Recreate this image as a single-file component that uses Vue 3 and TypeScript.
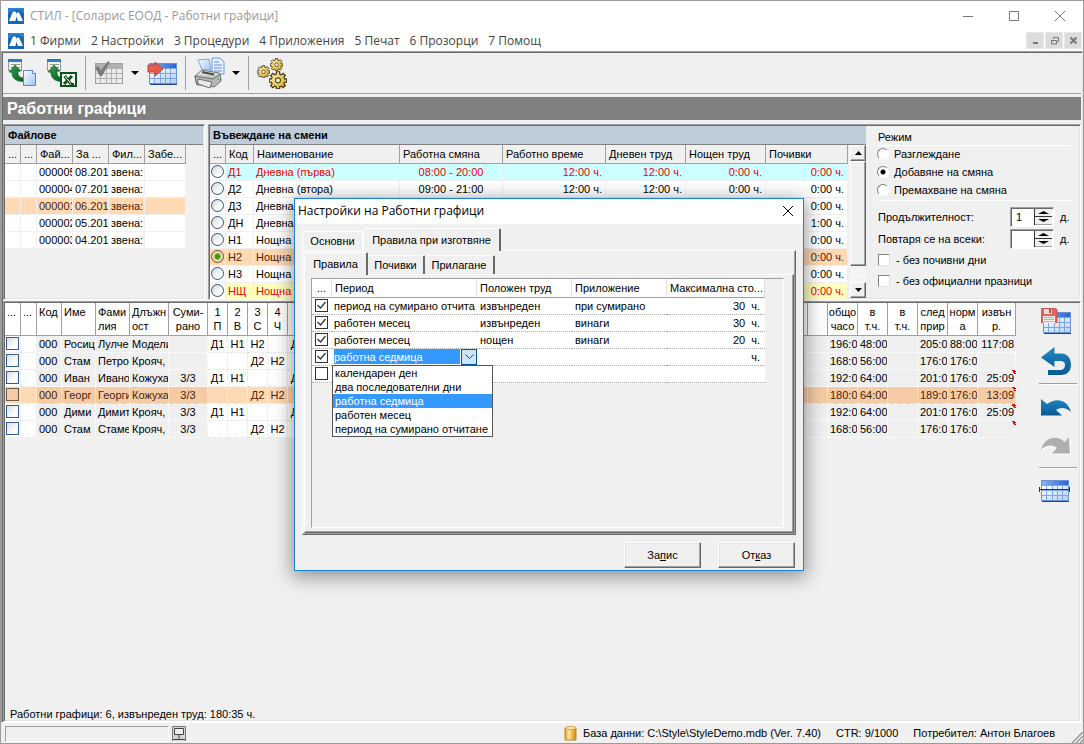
<script setup lang="ts">
import { ref } from 'vue'

interface FileRow { no: string; month: string; filter: string }
interface Shift { code: string; name: string; span: string; work: string; day: string; night: string; rest: string; tone?: string }
interface Person {
  no: string; first: string; last: string; job: string; sum: string; days: string[]
  totals: string[]; over: string; mark: boolean; current?: boolean
}
interface Rule { on: boolean; period: string; kind: string; apply: string; max: string; unit: string }

const menu = ['1 Фирми', '2 Настройки', '3 Процедури', '4 Приложения', '5 Печат', '6 Прозорци', '7 Помощ']

const files: FileRow[] = [
  { no: '000005', month: '08.201', filter: 'звена:' },
  { no: '000004', month: '07.201', filter: 'звена:' },
  { no: '000001', month: '06.201', filter: 'звена:' },
  { no: '000002', month: '05.201', filter: 'звена:' },
  { no: '000003', month: '04.201', filter: 'звена:' },
]
const currentFile = ref('000001')

const shifts: Shift[] = [
  { code: 'Д1', name: 'Дневна (първа)', span: '08:00 - 20:00', work: '12:00 ч.', day: '12:00 ч.', night: '0:00 ч.', rest: '0:00 ч.', tone: 'cyan' },
  { code: 'Д2', name: 'Дневна (втора)', span: '09:00 - 21:00', work: '12:00 ч.', day: '12:00 ч.', night: '0:00 ч.', rest: '0:00 ч.' },
  { code: 'Д3', name: 'Дневна', span: '', work: '', day: '', night: '', rest: '0:00 ч.' },
  { code: 'ДН', name: 'Дневна', span: '', work: '', day: '', night: '', rest: '1:00 ч.' },
  { code: 'Н1', name: 'Нощна (', span: '', work: '', day: '', night: '', rest: '0:00 ч.' },
  { code: 'Н2', name: 'Нощна (', span: '', work: '', day: '', night: '', rest: '0:00 ч.', tone: 'peach' },
  { code: 'Н3', name: 'Нощна (', span: '', work: '', day: '', night: '', rest: '0:00 ч.' },
  { code: 'НЩ', name: 'Нощна (', span: '', work: '', day: '', night: '', rest: '0:00 ч.', tone: 'yellow' },
]
const currentShift = ref('Н2')

const weekdays = ['П', 'В', 'С', 'Ч']
const dayCount = 31
const people: Person[] = [
  { no: '000', first: 'Росиц', last: 'Лулче', job: 'Модели', sum: '', days: ['Д1', 'Н1', 'Н2', '', 'Д1'], totals: ['196:0', '48:00', '', '205:0', '88:00'], over: '117:08', mark: false },
  { no: '000', first: 'Стам', last: 'Петро', job: 'Крояч,', sum: '', days: ['', '', 'Д2', 'Н2', ''], totals: ['168:0', '56:00', '', '176:0', '176:0'], over: '', mark: false },
  { no: '000', first: 'Иван', last: 'Ивано', job: 'Кожуха', sum: '3/3', days: ['Д1', 'Н1', '', '', 'Д1'], totals: ['192:0', '64:00', '', '201:0', '176:0'], over: '25:09', mark: true },
  { no: '000', first: 'Георг', last: 'Георги', job: 'Кожуха', sum: '3/3', days: ['', '', 'Д2', 'Н2', ''], totals: ['180:0', '64:00', '', '189:0', '176:0'], over: '13:09', mark: true, current: true },
  { no: '000', first: 'Дими', last: 'Димит', job: 'Крояч,', sum: '3/3', days: ['Д1', 'Н1', '', '', 'Д1'], totals: ['192:0', '64:00', '', '201:0', '176:0'], over: '25:09', mark: true },
  { no: '000', first: 'Стам', last: 'Стаме', job: 'Крояч,', sum: '3/3', days: ['', '', 'Д2', 'Н2', ''], totals: ['168:0', '56:00', '', '176:0', '176:0'], over: '', mark: true },
]

const modes = ['Разглеждане', 'Добавяне на смяна', 'Премахване на смяна']
const mode = ref('Добавяне на смяна')
const duration = ref('1')
const repeat = ref('')

const rules = ref<Rule[]>([
  { on: true, period: 'период на сумирано отчита', kind: 'извънреден', apply: 'при сумирано', max: '30', unit: 'ч.' },
  { on: true, period: 'работен месец', kind: 'извънреден', apply: 'винаги', max: '30', unit: 'ч.' },
  { on: true, period: 'работен месец', kind: 'нощен', apply: 'винаги', max: '20', unit: 'ч.' },
  { on: true, period: '', kind: '', apply: '', max: '', unit: 'ч.' },
  { on: false, period: '', kind: '', apply: '', max: '', unit: '' },
])
const editedRule = 3
const periods = ['календарен ден', 'два последователни дни', 'работна седмица', 'работен месец', 'период на сумирано отчитане']
const period = ref('работна седмица')
const listOpen = ref(true)
</script>

<template>
  <div class="window">
    <svg class="defs" width="0" height="0" aria-hidden="true">
      <defs>
        <linearGradient id="blueHead" x1="0" y1="0" x2="1" y2="0"><stop offset="0" stop-color="#86b4ee" /><stop offset="1" stop-color="#2a62d4" /></linearGradient>
        <linearGradient id="cellBlue" x1="0" y1="0" x2="1" y2="1"><stop offset="0" stop-color="#ffffff" /><stop offset="1" stop-color="#b4cdf4" /></linearGradient>
        <linearGradient id="arrowBlue" x1="0" y1="0" x2="0" y2="1"><stop offset="0" stop-color="#2286c0" /><stop offset="1" stop-color="#085a94" /></linearGradient>
        <linearGradient id="paper" x1="0" y1="0" x2="1" y2="1"><stop offset="0" stop-color="#ffffff" /><stop offset="1" stop-color="#9cc3f3" /></linearGradient>
        <linearGradient id="gold" x1="0" y1="0" x2="1" y2="1"><stop offset="0" stop-color="#fff6c0" /><stop offset="1" stop-color="#d3a41c" /></linearGradient>
        <linearGradient id="drum" x1="0" y1="0" x2="1" y2="0"><stop offset="0" stop-color="#e79a10" /><stop offset="0.35" stop-color="#ffe9a0" /><stop offset="1" stop-color="#d88400" /></linearGradient>
        <linearGradient id="green" x1="0" y1="0" x2="1" y2="1"><stop offset="0" stop-color="#35a04e" /><stop offset="1" stop-color="#0b5a24" /></linearGradient>
        <linearGradient id="metal" x1="0" y1="0" x2="0" y2="1"><stop offset="0" stop-color="#f4f4f0" /><stop offset="1" stop-color="#8f9090" /></linearGradient>
        <symbol id="brand" viewBox="0 0 16 16">
          <rect width="16" height="16" fill="#1767b8" />
          <path d="M0 0H16V5L11 2H5L0 6Z" fill="#2b80d0" />
          <path d="M1 13 5 3.500H7.500L8.500 6 9 4.500H11L15 13H10L8.500 8.500 7.500 13Z" fill="#fff" />
        </symbol>
        <symbol id="grid" viewBox="0 0 28 22">
          <rect x="0.500" y="0.500" width="27" height="20" fill="#7ca6e6" stroke="#6a93d4" />
          <rect x="1" y="1" width="26" height="4" fill="url(#blueHead)" />
          <g fill="url(#cellBlue)">
            <path d="M1 6h4v4H1zM6 6h5v4H6zM12 6h4v4h-4zM17 6h4v4h-4zM22 6h5v4h-5zM1 11h4v4H1zM6 11h5v4H6zM12 11h4v4h-4zM17 11h4v4h-4zM22 11h5v4h-5zM1 16h4v4H1zM6 16h5v4H6zM12 16h4v4h-4zM17 16h4v4h-4zM22 16h5v4h-5z" />
          </g>
          <path d="M1 21.500H28" stroke="#24457f" />
        </symbol>
        <symbol id="import" viewBox="0 0 20 24">
          <rect x="0.500" y="0.500" width="13" height="11" fill="#f4f2dc" stroke="#8a9aa8" />
          <rect x="0" y="0" width="14" height="3" fill="#2a78d0" />
          <path d="M3 5.500h9M3 8.500h9" stroke="#8f9a9a" />
          <path d="M1 13 7 6l6 6-3 .500c0 4 1 6 6 6.500v3.500C7 23 3.500 18 4 13.500Z" fill="url(#green)" stroke="#0b5a24" stroke-width="0.500" />
        </symbol>
        <symbol id="gear" viewBox="0 0 16 16">
          <path d="M6.500 0.700h3v2l1.600.700L12.600 2l2 2-1.400 1.500.600 1.500h2v3h-2l-.600 1.400 1.400 1.500-2 2-1.500-1.400-1.600.700v1.600h-3v-1.600l-1.600-.700-1.500 1.400-2-2 1.400-1.500L2.200 10h-2V7h2l.600-1.500L1.400 4l2-2 1.500 1.400 1.600-.700Z" fill="url(#gold)" stroke="#3b3210" />
          <circle cx="8" cy="8.300" r="2.200" fill="#efefef" stroke="#5e4c10" />
        </symbol>
      </defs>
    </svg>

    <header class="titlebar">
      <svg class="brand" aria-hidden="true"><use href="#brand" /></svg>
      <h1>СТИЛ - [Соларис ЕООД - Работни графици]</h1>
      <div class="caption-buttons">
        <button aria-label="Минимизирай"><svg width="12" height="12"><path d="M1 6.500h10" /></svg></button>
        <button aria-label="Увеличи"><svg width="12" height="12"><path d="M1.500 1.500h9v9h-9z" /></svg></button>
        <button aria-label="Затвори"><svg width="12" height="12"><path d="M1 1l10 10M11 1L1 11" /></svg></button>
      </div>
    </header>

    <nav class="menubar">
      <svg class="brand" aria-hidden="true"><use href="#brand" /></svg>
      <button v-for="m in menu" :key="m" class="menu-item">{{ m }}</button>
      <div class="mdi-buttons">
        <button aria-label="Минимизирай прозореца"><svg width="9" height="9"><path d="M2 7h5" stroke-width="2" /></svg></button>
        <button aria-label="Възстанови прозореца"><svg width="9" height="9"><path d="M3.500 3V1.500h5v4H7M1 4.500h5.500v3.500H1.500V4" /></svg></button>
        <button aria-label="Затвори прозореца"><svg width="9" height="9"><path d="M1.500 1.500l6 6M7.500 1.500l-6 6" stroke-width="2" /></svg></button>
      </div>
    </nav>

    <main class="client">
      <div class="toolbar" role="toolbar">
        <button class="tool" aria-label="Нов файл">
          <svg width="30" height="30"><use href="#import" x="0" y="1" width="20" height="24" /><path d="M15.500 12.500h9l3 3v12h-12z" fill="url(#paper)" stroke="#5f86b8" /><path d="M24.500 12.500v3h3" fill="#fff" stroke="#5f86b8" /></svg>
        </button>
        <button class="tool tool-excel" aria-label="Експорт в Excel">
          <svg width="30" height="30"><use href="#import" x="0" y="1" width="20" height="24" /><rect x="14" y="15" width="15" height="13" fill="#fff" stroke="#0b5418" stroke-width="2" /><path d="M17.500 18l6.500 8M25 18l-8 8" stroke="#0b5418" stroke-width="3" /><path d="M18 18.500l6 7" stroke="#fff" /><path d="M24 26h3" stroke="#0b5418" stroke-width="2" /></svg>
        </button>
        <i class="sep"></i>
        <button class="tool" aria-label="Одобри">
          <svg width="30" height="28"><rect x="1.500" y="4.500" width="27" height="20" fill="#b2b0b0" stroke="#a4a2a4" /><path d="M2 10h4v4H2zM7 10h5v4H7zM13 10h4v4h-4zM18 10h4v4h-4zM23 10h5v4h-5zM2 15h4v4H2zM7 15h5v4H7zM13 15h4v4h-4zM18 15h4v4h-4zM23 15h5v4h-5zM2 20h4v4H2zM7 20h5v4H7zM13 20h4v4h-4zM18 20h4v4h-4zM23 20h5v4h-5z" fill="#ebe9ea" /><path d="M1 9l3-2 3 4 7-9 2 1-8 14H6z" fill="#7d7b7f" /></svg>
        </button>
        <button class="drop" aria-label="Още за одобряване"></button>
        <button class="tool tool-send" aria-label="Прехвърли">
          <svg width="30" height="28"><use href="#grid" x="2" y="4" width="28" height="22" /><path d="M1 6h7V3l8 7-8 7v-4H1z" fill="#ec5a4a" stroke="#b5443c" /></svg>
        </button>
        <i class="sep"></i>
        <button class="tool" aria-label="Печат">
          <svg width="31" height="32"><path d="M4 3l11-1 2 11H8z" fill="url(#paper)" stroke="#7ea4dd" /><path d="M18 1h8l4 4v12H18z" fill="#e5f0ff" stroke="#6f9ade" /><path d="M20 5h5M20 8h8M20 11h8M20 14h8" stroke="#5f8fdc" /><path d="M1 19l7-6 17 3 2 7-6 5H3z" fill="url(#metal)" stroke="#717474" /><path d="M1 19l18 3 7-5 1 7-7 6-18-4z" fill="#b6b8b8" stroke="#6b6e6e" /><path d="M4 22l14 3-2 6-12-4z" fill="#e9ebeb" stroke="#6b6e6e" /><path d="M8 15l12 2.500" stroke="#4b4d4d" stroke-width="2" /><circle cx="24" cy="22" r="1" fill="#4cc04c" /></svg>
        </button>
        <button class="drop" aria-label="Още за печат"></button>
        <i class="sep"></i>
        <button class="tool" aria-label="Настройки">
          <svg width="32" height="32"><use href="#gear" x="0" y="8" width="13" height="13" /><use href="#gear" x="13" y="1" width="13" height="13" /><use href="#gear" x="12" y="14" width="18" height="18" /></svg>
        </button>
      </div>

      <h2 class="banner">Работни графици</h2>

      <div class="upper">
        <section class="panel files">
          <h3>Файлове</h3>
          <table class="grid">
            <colgroup><col class="w16"><col class="w16"><col class="w36"><col class="w36"><col class="w36"><col class="w41"></colgroup>
            <thead><tr><th>...</th><th>...</th><th>Фай...</th><th>За ...</th><th>Фил...</th><th>Забе...</th></tr></thead>
            <tbody>
              <tr v-for="f in files" :key="f.no" :class="{ peach: f.no === currentFile }" @click="currentFile = f.no">
                <td></td><td></td><td>{{ f.no }}</td><td>{{ f.month }}</td><td>{{ f.filter }}</td><td></td>
              </tr>
            </tbody>
          </table>
        </section>

        <section class="panel shift-panel">
          <div class="shifts">
            <h3>Въвеждане на смени</h3>
            <div class="shift-body">
              <table class="grid shift-table">
                <colgroup><col class="w16"><col class="w28"><col class="wide"><col class="w103"><col class="w103"><col class="w80"><col class="w80"><col class="w82"></colgroup>
                <thead><tr><th>...</th><th>Код</th><th>Наименование</th><th>Работна смяна</th><th>Работно време</th><th>Дневен труд</th><th>Нощен труд</th><th>Почивки</th></tr></thead>
                <tbody>
                  <tr v-for="s in shifts" :key="s.code" :class="s.tone">
                    <td class="pick"><input v-model="currentShift" type="radio" name="shift" :value="s.code" :aria-label="s.code"></td>
                    <td>{{ s.code }}</td><td>{{ s.name }}</td><td class="mid">{{ s.span }}</td>
                    <td class="num">{{ s.work }}</td><td class="num">{{ s.day }}</td><td class="num">{{ s.night }}</td><td class="num">{{ s.rest }}</td>
                  </tr>
                </tbody>
              </table>
              <div class="scrollbar">
                <button aria-label="Нагоре"><svg width="7" height="4"><path d="M0 4L3.500 0 7 4z" /></svg></button>
                <span class="thumb"></span>
                <button aria-label="Надолу"><svg width="7" height="4"><path d="M0 0L3.500 4 7 0z" /></svg></button>
              </div>
            </div>
          </div>

          <form class="mode" @submit.prevent>
            <div class="mode-title">Режим</div>
            <div class="radios">
              <label v-for="m in modes" :key="m"><input v-model="mode" type="radio" name="mode" :value="m">{{ m }}</label>
            </div>
            <div class="spin-row">
              <label for="duration">Продължителност:</label>
              <div class="spin">
                <input id="duration" v-model="duration" type="text">
                <div class="spin-buttons">
                  <button aria-label="Повече дни"><svg width="11" height="3"><path d="M0 3L5.500 0 11 3z" /></svg></button>
                  <button aria-label="По-малко дни"><svg width="11" height="3"><path d="M0 0L5.500 3 11 0z" /></svg></button>
                </div>
              </div>
              <span>д.</span>
            </div>
            <div class="spin-row">
              <label for="repeat">Повтаря се на всеки:</label>
              <div class="spin">
                <input id="repeat" v-model="repeat" type="text">
                <div class="spin-buttons">
                  <button aria-label="По-рядко"><svg width="11" height="3"><path d="M0 3L5.500 0 11 3z" /></svg></button>
                  <button aria-label="По-често"><svg width="11" height="3"><path d="M0 0L5.500 3 11 0z" /></svg></button>
                </div>
              </div>
              <span>д.</span>
            </div>
            <label class="tick"><input type="checkbox">- без почивни дни</label>
            <label class="tick"><input type="checkbox">- без официални празници</label>
          </form>
        </section>
      </div>

      <section class="panel schedule">
        <div class="schedule-main">
          <div class="schedule-scroll">
            <table class="plan">
              <colgroup>
                <col class="w16"><col class="w16"><col class="w25"><col class="w34"><col class="w34"><col class="w39"><col class="w39">
                <col v-for="d in dayCount" :key="d" class="w20">
                <col class="w30"><col class="w30"><col class="w30"><col class="w30"><col class="w30"><col class="w38">
              </colgroup>
              <thead>
                <tr>
                  <th>...</th><th>...</th><th>Код</th><th>Име</th><th>Фами<br>лия</th><th>Длъжн<br>ост</th><th class="mid">Суми-<br>рано</th>
                  <th v-for="d in dayCount" :key="d" class="mid"><template v-if="d <= weekdays.length">{{ d }}<br>{{ weekdays[d - 1] }}</template></th>
                  <th class="mid">общо<br>часо</th><th class="mid">в<br>т.ч.</th><th class="mid">в<br>т.ч.</th><th class="mid">след<br>прир</th><th class="mid">норм<br>а</th><th class="mid">извън<br>р.</th>
                </tr>
              </thead>
              <tbody>
                <tr v-for="(p, i) in people" :key="i" :class="{ current: p.current }">
                  <td class="day pick"><input type="checkbox" :aria-label="p.first"></td>
                  <td class="day"></td>
                  <td>{{ p.no }}</td><td>{{ p.first }}</td><td>{{ p.last }}</td><td>{{ p.job }}</td><td class="mid">{{ p.sum }}</td>
                  <td v-for="d in dayCount" :key="d" :class="['mid', { day: d < 29 }]">{{ p.days[d - 1] }}</td>
                  <td v-for="(t, k) in p.totals" :key="'t' + k">{{ t }}</td>
                  <td class="over" :class="{ marked: p.mark }">{{ p.over }}</td>
                </tr>
              </tbody>
            </table>
          </div>
          <div class="side" role="toolbar">
            <button class="s1" aria-label="Запиши"><svg width="32" height="28"><use href="#grid" x="2" y="5" width="28" height="22" /><path d="M0 1.500h14l2 1v13H0z" fill="#e0655e" stroke="#c65550" /><path d="M3 2h8v5H3z" fill="#f3dcd6" /><path d="M8 2h2v4H8z" fill="#c14b46" /><path d="M2 9h12v7H2z" fill="#f8efea" /><path d="M3 10.500h10M3 12.500h10M3 14.500h10" stroke="#d9a49c" /></svg></button>
            <button class="s2" aria-label="Върни"><svg width="32" height="30"><path d="M0 10.500L13.500 0V6.500H20C27 6.500 30 12 30 17.500 30 24 26 28 20 28H7V23H19C22 23 24 21 24 18 24 15 22 14 19 14H13.500V20Z" fill="url(#arrowBlue)" /></svg></button>
            <i></i>
            <button class="s3" aria-label="Отмени"><svg width="32" height="20"><path d="M0 1l6 5C14 0 26 0 30 14 25 9 19 9 15 12l6 5.500H0z" fill="url(#arrowBlue)" /></svg></button>
            <button class="s4" aria-label="Повтори"><svg width="32" height="20"><path d="M30 2l-5 5C17 0 5 1 1 15 7 9 13 10 17 13l-5 5.500h18z" fill="#fff" /><path d="M28 1l-4 5C16-1 4 0 0 14 6 8 12 9 16 12l-5 5.500h18z" fill="#afafaf" /></svg></button>
            <i></i>
            <button class="s5" aria-label="Раздели"><svg width="32" height="22"><use href="#grid" x="2" y="0" width="28" height="22" /><path d="M0 9.500h31M0.500 7v5M30.500 7v5" stroke="#24364c" /></svg></button>
          </div>
        </div>
        <p class="summary">Работни графици: 6, извънреден труд: 180:35 ч.</p>
      </section>
    </main>

    <footer class="status">
      <span class="well"></span>
      <svg width="14" height="15" aria-hidden="true"><rect width="14" height="15" fill="#d4d4d4" /><path d="M0.500 15V0.500H13.500V15" fill="none" stroke="#777" /><path d="M2.500 2.500h9v6h-9z" fill="#eee" stroke="#444" /><path d="M7 9v4M1 13.500h12" stroke="#444" /></svg>
      <div class="facts">
        <span class="db"><svg width="13" height="15" aria-hidden="true"><path d="M1 2h11v12H1z" fill="url(#drum)" stroke="#c98a18" /><ellipse cx="6.500" cy="2" rx="5.500" ry="1.500" fill="#ffefb8" stroke="#c79a40" /></svg>База данни: C:\Style\StyleDemo.mdb (Ver. 7.40)</span>
        <span>CTR: 9/1000</span>
        <span>Потребител: Антон Благоев</span>
      </div>
      <svg class="grip" width="12" height="12" aria-hidden="true"><path d="M1 12L12 1M5 12L12 5M9 12L12 9" stroke="#999" stroke-width="1.500" /></svg>
    </footer>

    <div class="dialog" role="dialog" aria-labelledby="dialog-title">
      <div class="dialog-title">
        <h2 id="dialog-title">Настройки на Работни графици</h2>
        <button aria-label="Затвори"><svg width="12" height="12"><path d="M1 1l10 10M11 1L1 11" /></svg></button>
      </div>
      <div class="dialog-body">
        <div class="tabs" role="tablist">
          <button role="tab" class="t-main">Основни</button>
          <button role="tab" class="t-rules active" aria-selected="true">Правила при изготвяне</button>
        </div>
        <div class="sheet outer">
          <div class="tabs" role="tablist">
            <button role="tab" class="t-list active" aria-selected="true">Правила</button>
            <button role="tab" class="t-rest framed">Почивки</button>
            <button role="tab" class="t-apply framed">Прилагане</button>
          </div>
          <div class="sheet inner">
            <div class="rule-box">
              <table class="rules">
                <colgroup><col class="w20"><col class="w145"><col class="w95"><col class="w95"><col class="w98"></colgroup>
                <thead><tr><th>...</th><th>Период</th><th>Положен труд</th><th>Приложение</th><th>Максимална сто...</th></tr></thead>
                <tbody>
                  <tr v-for="(r, i) in rules" :key="i">
                    <td class="pick"><input v-model="r.on" type="checkbox" :aria-label="'Правило ' + (i + 1)"></td>
                    <td v-if="i === editedRule" class="combo-cell">
                      <button class="combo" role="combobox" :aria-expanded="listOpen" aria-controls="period-list" @click="listOpen = !listOpen">
                        <span class="combo-value">{{ period }}</span>
                        <span class="combo-arrow"><svg width="9" height="6"><path d="M0.500 0.500l4 4 4-4" /></svg></span>
                      </button>
                      <select v-show="listOpen" id="period-list" v-model="period" size="5" aria-label="Период">
                        <option v-for="o in periods" :key="o" :value="o">{{ o }}</option>
                      </select>
                    </td>
                    <td v-else>{{ r.period }}</td>
                    <td>{{ r.kind }}</td><td>{{ r.apply }}</td>
                    <td class="limit"><span>{{ r.max }}</span><span class="unit">{{ r.unit }}</span></td>
                  </tr>
                </tbody>
              </table>
            </div>
          </div>
        </div>
        <div class="actions">
          <button>За<u>п</u>ис</button>
          <button>От<u>к</u>аз</button>
        </div>
      </div>
    </div>
  </div>
</template>

<style>
html, body { background: #f0f0f0; }
</style>

<style scoped>
.window, .window * { box-sizing: border-box; }
.window {
  position: relative; display: flex; flex-direction: column; height: 100vh; overflow: hidden;
  border: 1px solid #9a9a9a; background: #f0f0f0; color: #000;
  font: 11px/14px "Liberation Sans", Arial, sans-serif;
}
.defs { position: absolute; }
button { margin: 0; padding: 0; border: 0; background: none; color: inherit; font: inherit; }
button svg { display: block; }
h1, h2, h3, p { margin: 0; font: inherit; }
input { margin: 0; font: inherit; }

.titlebar { display: flex; align-items: center; flex: none; height: 29px; padding-left: 7px; background: #fff; color: #999; }
.brand { flex: none; width: 16px; height: 16px; margin-right: 6px; }
.titlebar h1 { font: 12px/16px "Open Sans", "Noto Sans", sans-serif; }
.caption-buttons { display: flex; margin-left: auto; }
.caption-buttons button { display: flex; justify-content: center; align-items: center; width: 46px; height: 28px; }
.caption-buttons svg, .mdi-buttons svg { fill: none; stroke: #777; }

.menubar { display: flex; align-items: center; flex: none; height: 21px; padding-left: 7px; background: #fff; color: #444; }
.menu-item { margin-right: 10px; font: 12px/18px "Open Sans", "Noto Sans", sans-serif; }
.mdi-buttons { display: flex; gap: 1px; margin-left: auto; padding-right: 1px; }
.mdi-buttons button { display: flex; align-items: center; justify-content: center; width: 18px; height: 17px; background: #dcdcdc; border: 1px solid #e8e8e8; }

.client { display: flex; flex-direction: column; flex: 1; min-height: 0; border: 1px solid; border-color: #a0a0a0 #e3e3e3 #fff #a0a0a0; box-shadow: inset 1px 1px 0 #696969; padding: 1px 1px 0 1px; }
.toolbar { display: flex; align-items: center; flex: none; height: 41px; padding-left: 5px; padding-bottom: 1px; border-bottom: 1px solid #a0a0a0; }
.toolbar .tool { flex: none; }
.tool-excel { margin-left: 9px; }
.sep { flex: none; width: 1px; height: 34px; margin: 0 8px; background: #a0a0a0; }
.drop { width: 8px; height: 34px; margin-left: 7px; }
.drop::before { content: ""; display: block; border: 4px solid transparent; border-top-color: #000; border-bottom: 0; }
.tool-send { margin-left: 8px; }
.banner { flex: none; height: 23px; margin-top: 3px; padding-left: 4px; background: #808080; color: #fff; font-size: 16px; line-height: 23px; font-weight: 700; }

.upper { display: flex; flex: none; gap: 3px; height: 176px; margin-top: 4px; }
.panel { border: 1px solid; border-color: #a0a0a0 #fff #fff #a0a0a0; box-shadow: inset 1px 1px 0 #696969, inset -1px -1px 0 #e3e3e3; padding: 1px; overflow: hidden; }
.files { flex: none; width: 202px; }
h3 { height: 19px; padding-left: 3px; border-bottom: 1px solid #808080; background: #bfcddb; font-weight: 700; line-height: 18px; }
.shift-panel { display: flex; flex: 1; min-width: 0; }
.shifts { flex: 1; min-width: 0; }
.shift-body { display: flex; gap: 2px; height: 153px; }

table { table-layout: fixed; border-collapse: separate; border-spacing: 0; }
th, td { padding: 0; overflow: hidden; white-space: nowrap; text-align: left; font-weight: 400; }
.w16 { width: 16px; } .w20 { width: 20px; } .w25 { width: 25px; } .w28 { width: 28px; }
.w30 { width: 30px; } .w34 { width: 34px; } .w36 { width: 36px; } .w38 { width: 38px; }
.w39 { width: 39px; } .w41 { width: 41px; } .w80 { width: 80px; } .w82 { width: 82px; } .w95 { width: 95px; }
.w98 { width: 98px; } .w103 { width: 103px; } .w145 { width: 145px; }

.grid { width: 181px; }
.grid th { height: 19px; padding-left: 3px; border-right: 1px solid #a0a0a0; border-bottom: 1px solid #a0a0a0; background: #f0f0f0; line-height: 18px; }
.grid td { height: 17px; padding: 0 2px; border-right: 1px solid #f0f0f0; border-bottom: 1px solid #f0f0f0; background: #fff; line-height: 16px; }
.shift-table { flex: 1; min-width: 0; width: auto; }
.grid .num { padding-right: 3px; text-align: right; }
.mid { text-align: center; }
.peach td { background: #ffd8b4; color: #4a2408; }
.cyan td { background: #ccffff; color: #f00000; }
.yellow td { background: #ffffc0; color: #f00000; }
.cyan .pick, .yellow .pick { background: #fff; }
.grid .pick, .plan .pick, .rules .pick { padding: 0; vertical-align: top; }
.pick input { display: block; appearance: none; width: 13px; height: 13px; }
.grid .pick input { margin: 1px; border: 1px solid #34506e; border-radius: 50%; background: linear-gradient(135deg, #cfd6dc, #fff 70%); }
.grid .pick input:checked { border-color: #6b5228; background: radial-gradient(circle, #3f9a10 0 2px, #8cc058 3px, #f4d9b4 4px); }

.scrollbar { display: flex; flex-direction: column; flex: none; width: 16px; background: repeating-conic-gradient(#fff 0 25%, #eaeaea 0 50%) 0 0/2px 2px; }
.scrollbar button, .thumb { border: 1px solid; border-color: #fff #696969 #696969 #fff; background: #f0f0f0; box-shadow: inset -1px -1px 0 #a0a0a0; }
.scrollbar button { display: flex; align-items: center; justify-content: center; flex: none; height: 16px; }
.thumb { height: 105px; margin-bottom: auto; }

.mode { flex: none; width: 213px; padding: 4px 8px 0 11px; }
.mode-title { padding-left: 1px; line-height: 15px; }
.radios { display: flex; flex-direction: column; gap: 4px; height: 56px; margin-bottom: 5px; padding-top: 1px; border-top: 1px solid #fff; border-bottom: 1px solid #fff; }
.radios label { display: flex; align-items: center; height: 14px; }
.radios input { appearance: none; width: 12px; height: 12px; margin-right: 5px; border: 1px solid; border-color: #808080 #fff #fff #808080; border-radius: 50%; background: #fff; }
.radios input:checked { background: radial-gradient(circle, #000 0 2px, #fff 3px); }
.spin-row { display: flex; align-items: center; height: 22px; padding-left: 1px; }
.spin-row > label { flex: 1; }
.spin-row > span { width: 11px; margin-left: 6px; white-space: nowrap; }
.spin { display: flex; width: 44px; height: 20px; border: 1px solid; border-color: #a0a0a0 #fff #fff #a0a0a0; background: #fff; box-shadow: inset 1px 1px 0 #696969; padding: 1px; }
.spin input { flex: 1; min-width: 0; padding: 0 0 0 4px; border: 0; background: #fff; }
.spin-buttons { width: 18px; border-left: 1px solid #333; background: #f0f0f0; }
.spin-buttons button { display: flex; align-items: center; justify-content: center; width: 100%; height: 8px; border-bottom: 1px solid #333; }
.spin-buttons button:last-child { border-bottom-color: #a0a0a0; }
.tick { display: flex; align-items: center; height: 22px; padding-left: 1px; white-space: nowrap; }
.spin-row + .tick { height: 20px; }
.tick input { appearance: none; width: 12px; height: 12px; margin-right: 6px; border: 1px solid; border-color: #808080 #e3e3e3 #e3e3e3 #808080; background: #fff; }

.schedule { display: flex; flex-direction: column; flex: 1; min-height: 0; margin-top: 1px; }
.schedule-main { display: flex; flex: 1; min-height: 0; }
.schedule-scroll { flex: 1; min-width: 0; overflow: hidden; }
.plan { width: 1011px; }
.plan th { height: 33px; padding: 2px 0 0 2px; border-right: 1px solid #a0a0a0; border-bottom: 1px solid #a0a0a0; background: #fff; vertical-align: top; }
.plan th.mid { padding-left: 0; }
.plan td { height: 17px; padding-left: 2px; border-right: 1px dotted #fff; border-bottom: 1px dotted #fff; background: #efefef; line-height: 16px; }
.plan td.mid { padding: 0; }
.plan .day { border-color: #e4e4e4; background: #fff; }
.plan .current td { background: #f5cba5; border-color: #fff; color: #4a2408; }
.plan .current .day { background: #ffd8b4; }
.plan .pick input { margin: 1px; border: 1px solid #2f5e94; background: linear-gradient(135deg, #dcdcdc, #fff 70%); }
.plan .current .pick input { border-color: #6b5a48; background: #f5cba5; }
.plan .over { padding: 0 1px 0 0; text-align: right; }
.plan .over.marked { background-image: linear-gradient(to top right, transparent 50%, #f00 50%); background-repeat: no-repeat; background-size: 5px 5px; background-position: right top; background-origin: border-box; }

.side { display: flex; flex-direction: column; flex: none; width: 43px; padding: 4px 2px 0 3px; }
.side button { height: 28px; padding-left: 2px; }
.side i { height: 2px; border-top: 1px solid #a0a0a0; border-bottom: 1px solid #fff; }
.side .s2 { height: 30px; margin: 12px 0 6px; }
.side .s3 { height: 20px; margin: 13px 0 18px; }
.side .s4 { height: 20px; margin-bottom: 11px; }
.side .s5 { height: 22px; margin-top: 11px; padding: 0; }
.summary { flex: none; padding-left: 5px; line-height: 12px; }

.status { display: flex; align-items: center; flex: none; height: 20px; padding: 1px 0 0 4px; }
.well { width: 164px; height: 16px; margin-right: 3px; border: 1px solid; border-color: #a0a0a0 #fff #fff #a0a0a0; }
.facts { display: flex; gap: 15px; margin-left: auto; }
.db { display: flex; gap: 6px; }
.grip { align-self: flex-end; margin-left: 16px; }

.dialog { position: absolute; left: 293px; top: 197px; width: 510px; border: 1px solid #1883d7; background: #f0f0f0; box-shadow: 0 4px 18px 2px rgba(0, 0, 0, 0.4); }
.dialog-title { display: flex; align-items: center; justify-content: space-between; height: 25px; padding: 0 9px 1px 3px; background: #fff; }
.dialog-title h2 { font: 12px/16px "Open Sans", "Noto Sans", sans-serif; }
.dialog-title svg { fill: none; stroke: #000; }
.dialog-body { padding: 4px 7px 2px; }
.tabs { display: flex; align-items: flex-end; height: 22px; }
.tabs button { height: 19px; border: 1px solid #fff; border-bottom: 0; text-align: center; border-radius: 2px 2px 0 0; white-space: nowrap; }
.tabs .framed { border-right: 2px solid #696969; border-left: 0; }
.tabs .active { height: 23px; margin-bottom: -1px; padding-bottom: 1px; border-right: 2px solid #696969; background: #f0f0f0; position: relative; }
.t-main { width: 61px; }
.t-rules { width: 138px; }
.t-list { width: 64px; }
.t-rest { width: 57px; }
.t-apply { width: 70px; }
.sheet { border: 1px solid; border-color: #fff #696969 #696969 #fff; box-shadow: inset -1px -1px 0 #a0a0a0; }
.outer { padding: 1px; }
.inner { padding: 3px 9px 4px 6px; }
.rule-box { height: 250px; border: 1px solid; border-color: #a0a0a0 #fff #fff #a0a0a0; }
.rules { width: 453px; }
.rules th { height: 19px; padding-left: 3px; border-right: 1px solid #e3e3e3; border-bottom: 1px solid #a0a0a0; background: #fff; line-height: 18px; }
.rules th:first-child { padding-left: 5px; }
.rules td { height: 17px; padding-left: 3px; border-bottom: 1px dotted #aaa; background: #fff; line-height: 16px; }
.rules td:nth-child(2) { padding-left: 2px; }
.rules .pick input { margin: 1px 3px; border: 1px solid #333; background: #fff; }
.rules .pick input:checked { background: #fff url("data:image/svg+xml,%3Csvg xmlns='http://www.w3.org/2000/svg' width='11' height='11'%3E%3Cpath d='M1.500 5l3 3 5-6' fill='none' stroke='%23333' stroke-width='1.300'/%3E%3C/svg%3E"); }
.rules .limit { padding-right: 5px; text-align: right; }
.unit { margin-left: 6px; }
.rules .combo-cell { position: relative; overflow: visible; }
.combo { display: flex; width: 100%; height: 16px; text-align: left; }
.combo-value { flex: 1; height: 15px; margin-right: 1px; background: #3399ff; color: #fff; line-height: 16px; }
.combo-arrow { display: flex; align-items: center; justify-content: center; width: 16px; border: 1px solid #005499; background: #cce4f7; }
.combo-arrow svg { fill: none; stroke: #444; }
select { position: absolute; left: 0; top: 16px; z-index: 2; width: 161px; height: 72px; margin: 0; padding: 0; overflow: hidden; border: 1px solid #555; border-radius: 0; background: #fff; color: #000; font: inherit; outline: 0; scrollbar-width: none; }
option { height: 14px; min-height: 14px; padding: 1px 2px 0; line-height: 14px; }
option:checked { background: #3399ff linear-gradient(#3399ff, #3399ff); color: #fff; }
.actions { display: flex; justify-content: flex-end; gap: 17px; margin-top: 7px; padding-right: 1px; }
.actions button { width: 77px; height: 26px; border: 1px solid; border-color: #fff #696969 #696969 #fff; box-shadow: inset -1px -1px 0 #a0a0a0, inset 1px 1px 0 #e3e3e3; }
</style>
